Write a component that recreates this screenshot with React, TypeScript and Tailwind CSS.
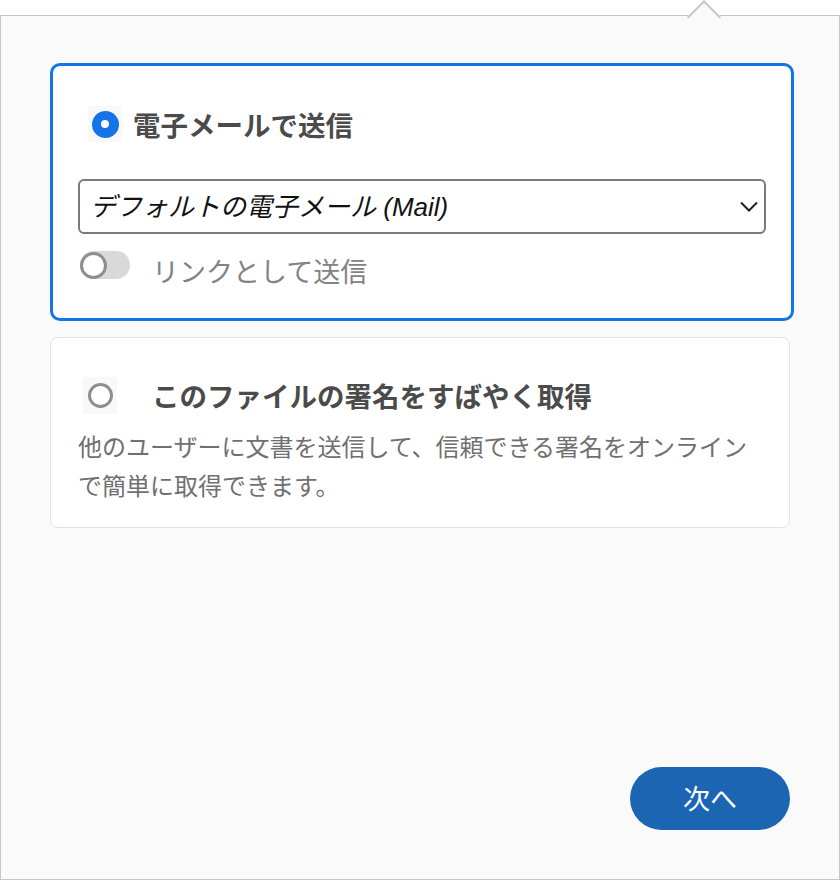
import { useState } from 'react'

const JP = '"Noto Sans CJK JP", "Noto Sans", sans-serif'
const SELECT_FONT = '"Liberation Sans", "Noto Sans CJK JP", sans-serif'

export default function App() {
  const [mode, setMode] = useState<'email' | 'sign'>('email')
  const [asLink, setAsLink] = useState(false)

  return (
    <div className="w-[840px] h-[880px] bg-white pt-[15px]" style={{ fontFamily: JP }}>
      <div className="relative flex h-[865px] w-[840px] flex-col border border-[#c6c6c6] bg-[#fafafa] px-[49px] pt-[47px] pb-[49px]">
        {/* popover caret */}
        <div className="absolute -top-[11px] left-[691px] h-[24px] w-[24px] rotate-45 border-t-2 border-l-2 border-[#c8c8c8] bg-[#fafafa]" />

        {/* selected option: send by email */}
        <div
          className={
            mode === 'email'
              ? 'w-[744px] rounded-[10px] border-[3px] border-[#1473e6] bg-white px-[25px] pt-[40px] pb-[39px]'
              : 'w-[744px] rounded-[10px] border-[3px] border-[#e3e3e3] bg-white px-[25px] pt-[40px] pb-[39px]'
          }
        >
          <button
            className="ml-[10px] flex items-center gap-[11px] cursor-pointer"
            onClick={() => setMode('email')}
          >
            <span className="flex h-[36px] w-[34px] items-center justify-center bg-[#f8f8f8]">
              <span className="flex h-[27px] w-[27px] items-center justify-center rounded-full bg-[#1473e6]">
                <span className="h-[8px] w-[8px] rounded-full bg-white" />
              </span>
            </span>
            <span className="text-[27.5px] font-bold leading-[36px] text-[#4b4b4b]">電子メールで送信</span>
          </button>

          <div
            className="mt-[37px] flex h-[55px] w-[688px] items-center justify-between rounded-[6px] border-2 border-[#7a7a7a] pl-[10px] pr-[6px]"
            style={{ fontFamily: SELECT_FONT }}
          >
            <span className="text-[26px] italic leading-none text-[#111]">デフォルトの電子メール (Mail)</span>
            <svg width="18" height="11" viewBox="0 0 18 11" fill="none">
              <polyline points="1,1.5 9,9.5 17,1.5" stroke="#222" strokeWidth="2" />
            </svg>
          </div>

          <div className="mt-[17px] flex h-[28px] items-center gap-[22px]">
            <button
              className="relative ml-[2px] h-[28px] w-[50px] cursor-pointer rounded-full bg-[#d9d9d9]"
              onClick={() => setAsLink(!asLink)}
            >
              <span
                className={
                  asLink
                    ? 'absolute left-[23px] top-[0.5px] h-[27px] w-[27px] rounded-full border-[3px] border-[#1473e6] bg-white'
                    : 'absolute left-0 top-[0.5px] h-[27px] w-[27px] rounded-full border-[3px] border-[#8e8e8e] bg-white'
                }
              />
            </button>
            <span className="mt-[12px] text-[27px] leading-[28px] text-[#838383]">リンクとして送信</span>
          </div>
        </div>

        {/* second option: request signatures */}
        <div className="mt-[16px] w-[740px] rounded-[8px] border border-[#e3e3e3] bg-white pl-[27px] pr-[27px] pt-[39px] pb-[23px]">
          <button className="ml-[5px] flex items-center gap-[35px] cursor-pointer" onClick={() => setMode('sign')}>
            <span className="flex h-[37px] w-[34px] items-center justify-center bg-[#f8f8f8]">
              <span
                className={
                  mode === 'sign'
                    ? 'h-[25px] w-[25px] rounded-full border-[8px] border-[#1473e6] bg-white'
                    : 'h-[25px] w-[25px] rounded-full border-[3px] border-[#8e8e8e] bg-white'
                }
              />
            </span>
            <span className="text-[27.5px] font-bold leading-[37px] text-[#4b4b4b]">このファイルの署名をすばやく取得</span>
          </button>
          <p className="mt-[12px] text-[24px] leading-[39px] text-[#707070]">
            他のユーザーに文書を送信して、信頼できる署名をオンラインで簡単に取得できます。
          </p>
        </div>

        <button className="mt-auto ml-auto flex h-[63px] w-[160px] items-center justify-center rounded-full bg-[#1c65b3] text-[27px] text-white cursor-pointer">
          次へ
        </button>
      </div>
    </div>
  )
}
